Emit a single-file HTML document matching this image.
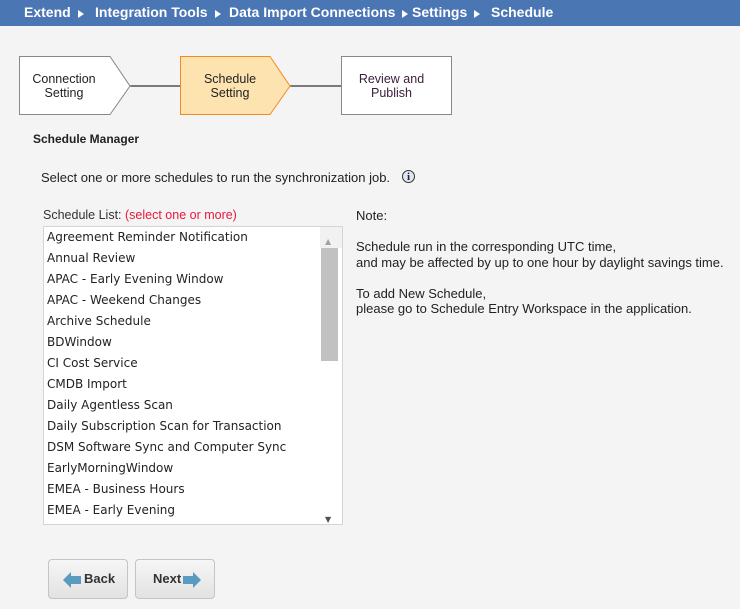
<!DOCTYPE html>
<html><head><meta charset="utf-8"><style>
body{margin:0;width:740px;height:609px;background:#f4f4f4;font-family:"Liberation Sans",Arial,sans-serif;position:relative;overflow:hidden;color:#222}
.hdr{position:absolute;left:0;top:0;width:740px;height:26px;background:#4a76b4;color:#fff;font-weight:bold;font-size:14px;line-height:25px}
.hdr span{position:absolute;top:0;white-space:nowrap}
.hdr i{display:inline-block;width:0;height:0;border-left:6px solid #fff;border-top:4.5px solid transparent;border-bottom:4.5px solid transparent;margin-left:7px;vertical-align:-1px}
.a{position:absolute;font-size:13px}
.list{position:absolute;left:43px;top:226px;width:298px;height:297px;border:1px solid #d4d4d4;background:#fff;overflow:hidden}
.list div{font-family:"DejaVu Sans",Verdana,sans-serif;font-size:12px;height:21px;line-height:21px;padding-left:3px;color:#222}
.sb{position:absolute;right:0;top:0;width:19px;height:297px;background:#f1f1f1}
.btn{position:absolute;top:559px;width:78px;height:38px;border:1px solid #c4c4c4;border-radius:4px;background:linear-gradient(#f6f6f6,#e2e2e2);font-weight:bold;font-size:13px;color:#333;line-height:38px}
</style></head><body>
<div class="hdr">
<span style="left:24px">Extend<i></i></span>
<span style="left:95px">Integration Tools<i></i></span>
<span style="left:229px">Data Import Connections<i></i></span>
<span style="left:412px">Settings<i></i></span>
<span style="left:491px">Schedule</span>
</div>
<svg style="position:absolute;left:0;top:50px" width="470" height="70">
<line x1="130" y1="36" x2="180" y2="36" stroke="#000"/>
<line x1="290" y1="36" x2="342" y2="36" stroke="#000"/>
<path d="M19.5 6.5H110L130 36L110 64.5H19.5Z" fill="#fff" stroke="#888"/>
<path d="M180.5 6.5H270L290 36L270 64.5H180.5Z" fill="#fde3b0" stroke="#f48a1e"/>
<rect x="341.5" y="6.5" width="110" height="58" fill="#fff" stroke="#888"/>
</svg>
<div class="a" style="left:19px;top:72px;width:90px;text-align:center;font-size:12.5px;line-height:14px">Connection<br>Setting</div>
<div class="a" style="left:180px;top:72px;width:100px;text-align:center;font-size:12.5px;line-height:14px">Schedule<br>Setting</div>
<div class="a" style="left:341px;top:72px;width:101px;text-align:center;font-size:12.5px;line-height:14px;color:#3a1d3a">Review and<br>Publish</div>
<div class="a" style="left:33px;top:132px;font-weight:bold;font-size:12px">Schedule Manager</div>
<div class="a" style="left:41px;top:170px">Select one or more schedules to run the synchronization job.</div>
<div style="position:absolute;left:402px;top:170px;width:13px;height:13px;border-radius:50%;border:1px solid #333;background:#dde6f2;font:bold 11px 'Liberation Serif',serif;text-align:center;line-height:13px;box-sizing:border-box">i</div>
<div class="a" style="left:43px;top:208px;font-size:12.5px;color:#333">Schedule List: <span style="color:#e8183c">(select one or more)</span></div>
<div class="list">
<div>Agreement Reminder Notification</div><div>Annual Review</div><div>APAC - Early Evening Window</div><div>APAC - Weekend Changes</div><div>Archive Schedule</div><div>BDWindow</div><div>CI Cost Service</div><div>CMDB Import</div><div>Daily Agentless Scan</div><div>Daily Subscription Scan for Transaction</div><div>DSM Software Sync and Computer Sync</div><div>EarlyMorningWindow</div><div>EMEA - Business Hours</div><div>EMEA - Early Evening</div>
<div class="sb"><div style="position:absolute;left:1px;top:21px;width:17px;height:113px;background:#c1c1c1;padding:0"></div>
<span style="position:absolute;left:5px;top:4px;font-size:8px;color:#a3a3a3">▲</span>
<span style="position:absolute;left:5px;top:282px;font-size:8px;color:#505050">▼</span></div>
</div>
<div class="a" style="left:356px;top:208px;font-size:13px;line-height:15.5px;color:#222">Note:<br><br>Schedule run in the corresponding UTC time,<br>and may be affected by up to one hour by daylight savings time.<br><br>To add New Schedule,<br>please go to Schedule Entry Workspace in the application.</div>
<div class="btn" style="left:48px"><svg style="position:absolute;left:14px;top:12px" width="18" height="16"><path d="M0 8L8 0V4H18V12H8V16Z" fill="#5b9bc0"/></svg><span style="position:absolute;left:35px">Back</span></div>
<div class="btn" style="left:135px"><span style="position:absolute;left:17px">Next</span><svg style="position:absolute;left:47px;top:12px" width="18" height="16"><path d="M18 8L10 0V4H0V12H10V16Z" fill="#5b9bc0"/></svg></div>
</body></html>
